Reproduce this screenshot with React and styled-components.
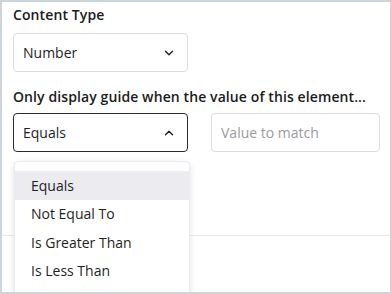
import React from "react";
import styled, { createGlobalStyle } from "styled-components";

const Global = createGlobalStyle`
  html, body { margin: 0; padding: 0; background: #fff; }
  * { box-sizing: border-box; }
`;

const Frame = styled.div`
  width: 391px;
  height: 294px;
  border: 2px solid #cdd5dc;
  border-right-width: 1px;
  background: #fff;
  overflow: hidden;
  position: relative;
  font-family: "Open Sans", "Liberation Sans", sans-serif;
  color: #1e1e24;
`;

const Section = styled.div`
  padding: 3px 10px 0 11px;
  display: flex;
  flex-direction: column;
`;

const Label = styled.div`
  font-size: 14px;
  font-weight: 600;
  line-height: 20px;
  letter-spacing: 0.1px;
  color: #1b1b20;
  margin-top: ${(p) => p.$mt || 0}px;
  margin-bottom: ${(p) => p.$mb || 0}px;
`;

const Row = styled.div`
  display: flex;
  gap: 23px;
  align-items: flex-start;
`;

const SelectBox = styled.div`
  width: 175px;
  height: 39px;
  border: 1px solid ${(p) => (p.$active ? "#2a2a30" : "#dcdde3")};
  border-radius: 4px;
  display: flex;
  align-items: center;
  justify-content: space-between;
  padding: 0 13px 0 9px;
  font-size: 14px;
  position: relative;
`;

const Input = styled.div`
  width: 169px;
  height: 39px;
  border: 1px solid #dcdde3;
  border-radius: 4px;
  display: flex;
  align-items: center;
  padding: 0 9px;
  font-size: 14px;
  color: #9a9aa2;
`;

const Divider = styled.div`
  height: 1px;
  background: #e6e6ea;
  margin-top: 83px;
`;

const Menu = styled.div`
  position: absolute;
  left: 12px;
  top: 159px;
  width: 176px;
  padding-top: 9px;
  height: 160px;
  background: #fff;
  border: 1px solid #ececf0;
  border-radius: 4px;
  box-shadow: 0 2px 6px rgba(0, 0, 0, 0.12);
  z-index: 2;
`;

const Item = styled.div`
  height: 28.5px;
  display: flex;
  align-items: center;
  padding-left: 16px;
  font-size: 14px;
  background: ${(p) => (p.$hi ? "#ebebf0" : "transparent")};
`;

const Chevron = ({ up }) => (
  <svg width="10" height="6" viewBox="0 0 10 6" style={{ display: "block" }}>
    <path
      d={up ? "M1.5 4.8 L5 1.3 L8.5 4.8" : "M1.5 1.2 L5 4.7 L8.5 1.2"}
      fill="none"
      stroke="#1e1e24"
      strokeWidth="1.4"
      strokeLinecap="round"
      strokeLinejoin="round"
    />
  </svg>
);

export default function App() {
  const items = ["Equals", "Not Equal To", "Is Greater Than", "Is Less Than"];
  return (
    <>
      <Global />
      <Frame>
        <Section>
          <Label $mb={8}>Content Type</Label>
          <SelectBox>
            <span>Number</span>
            <Chevron />
          </SelectBox>
          <Label $mt={15} $mb={6}>
            Only display guide when the value of this element...
          </Label>
          <Row>
            <SelectBox $active>
              <span>Equals</span>
              <Chevron up />
            </SelectBox>
            <Input>Value to match</Input>
          </Row>
        </Section>
        <Divider />
        <Menu>
          {items.map((t, i) => (
            <Item key={t} $hi={i === 0}>
              {t}
            </Item>
          ))}
        </Menu>
      </Frame>
    </>
  );
}
